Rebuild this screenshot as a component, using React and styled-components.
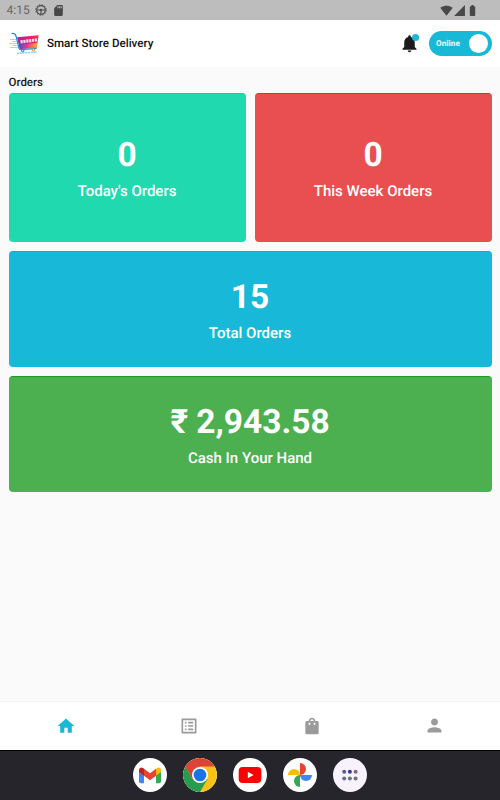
import React from 'react';
import styled, { createGlobalStyle } from 'styled-components';
import {
  MdBatteryFull,
  MdHome,
  MdListAlt,
  MdNotifications,
  MdPerson,
  MdSdCard,
  MdShoppingBag,
  MdSignalCellular4Bar,
  MdSignalWifi4Bar,
} from 'react-icons/md';

const GlobalStyle = createGlobalStyle`
  * {
    box-sizing: border-box;
  }

  body {
    margin: 0;
    font-family: Roboto, 'Liberation Sans', sans-serif;
    background: #fafafa;
    text-rendering: geometricPrecision;
  }
`;

const Screen = styled.div`
  width: 500px;
  height: 800px;
  display: flex;
  flex-direction: column;
  overflow: hidden;
  background: #fafafa;
`;

const StatusBar = styled.div`
  height: 20px;
  flex: none;
  display: flex;
  align-items: center;
  justify-content: space-between;
  padding: 0 21px 0 6.5px;
  background: #bdbdbd;
  color: #484848;
`;

const StatusGroup = styled.div`
  display: flex;
  align-items: center;
  gap: ${(props) => props.$gap || 0}px;
`;

const Clock = styled.span`
  width: 23px;
  font-size: 12px;
  line-height: 20px;
  white-space: nowrap;
  color: #666;
`;

const Header = styled.header`
  height: 47px;
  flex: none;
  display: flex;
  align-items: center;
  padding: 0 8px 0 9px;
  background: #fff;
`;

const Title = styled.h1`
  flex: 1;
  margin: 0 0 1px 8px;
  font-size: 11.6px;
  font-weight: 500;
  color: #111;
`;

const BellButton = styled.div`
  position: relative;
  display: flex;
  margin-right: 9px;
  color: #1b1b1b;
`;

const BellDot = styled.span`
  position: absolute;
  top: 1px;
  right: 1px;
  width: 7px;
  height: 7px;
  border-radius: 50%;
  background: #18b9d6;
`;

const Toggle = styled.div`
  width: 63px;
  height: 25px;
  display: flex;
  align-items: center;
  justify-content: space-between;
  padding: 0 4px 0 7px;
  border-radius: 13px;
  background: #18b9d6;
  color: #d7f5fb;
  font-size: 8.2px;
  font-weight: 900;
`;

const Knob = styled.span`
  width: 19px;
  height: 19px;
  border-radius: 50%;
  background: #fff;
`;

const Content = styled.main`
  flex: 1;
  padding: 8px 8.5px 0;
`;

const SectionTitle = styled.h2`
  margin: 0 0 4px;
  font-size: 11.5px;
  font-weight: 500;
  line-height: 14px;
  color: #1b1b1b;
`;

const Cards = styled.div`
  display: grid;
  grid-template-columns: 1fr 1fr;
  gap: 9px;
`;

const Card = styled.div`
  grid-column: ${(props) => (props.$wide ? 'span 2' : 'auto')};
  height: ${(props) => (props.$wide ? 116 : 149)}px;
  display: flex;
  flex-direction: column;
  align-items: center;
  justify-content: center;
  border-radius: 4px;
  border-top: 1px solid ${(props) => props.$edge};
  background: ${(props) => props.$color};
  color: #fff;
`;

const Amount = styled.div`
  font-size: 33.5px;
  font-weight: 700;
  line-height: 40px;
`;

const Label = styled.div`
  margin-top: 6px;
  font-size: 15px;
  font-weight: 500;
  line-height: 18px;
`;

const BottomNav = styled.nav`
  height: 49px;
  flex: none;
  display: flex;
  padding: 0 4px 1px 5px;
  border-top: 1px solid #f3f3f3;
  background: #fff;
`;

const NavItem = styled.div`
  flex: 1;
  display: flex;
  align-items: center;
  justify-content: center;
  color: ${(props) => (props.$active ? '#18b9d6' : '#9b9b9b')};
`;

const Dock = styled.div`
  height: 50px;
  flex: none;
  display: flex;
  align-items: center;
  justify-content: center;
  gap: 16px;
  padding-bottom: 1px;
  border-top: 1px solid #000;
  background: #25252b;
`;

const AppIcon = styled.div`
  width: 34px;
  height: 34px;
  display: flex;
  border-radius: 50%;
  overflow: hidden;
  background: ${(props) => props.$color || '#fff'};
`;

const StoreLogo = () => (
  <svg width='30' height='24' viewBox='0 0 30 24'>
    <defs>
      <linearGradient id='cart' x1='0' y1='0.8' x2='1' y2='0.2'>
        <stop offset='0' stopColor='#4b3fb8' />
        <stop offset='0.3' stopColor='#b51f9a' />
        <stop offset='0.65' stopColor='#ed1773' />
        <stop offset='1' stopColor='#f9304c' />
      </linearGradient>
      <linearGradient id='basket' x1='0' y1='0' x2='1' y2='0'>
        <stop offset='0' stopColor='#5b45c4' />
        <stop offset='0.45' stopColor='#e6398a' />
        <stop offset='1' stopColor='#ffb31a' />
      </linearGradient>
    </defs>
    <path d='M8 5.2 29.6 3.2 27.8 15.5 10.8 17Z' fill='url(#cart)' />
    <path d='M10 12.5 28.2 11 27.6 15.6 10.8 17Z' fill='url(#basket)' />
    <path
      d='M2.5 1.5Q6 .8 7 4L10 16.4Q10.4 17.8 12.4 17.6L27.6 16.4'
      fill='none'
      stroke='#278cc7'
      strokeWidth='1.2'
    />
    <path
      d='M1 7.5h6M3 9.5h5M0 11.5h8M3.5 13.5h5M1 15.5h8'
      stroke='#8ad2ee'
      strokeWidth='0.8'
    />
    <path
      d='M11.5 9.9 28 7.9'
      stroke='#fff'
      strokeWidth='3.2'
      strokeDasharray='2.2 0.7'
      opacity='0.85'
    />
    <circle cx='13.8' cy='18.8' r='1.2' fill='#fff' stroke='#704ca8' />
    <circle cx='24.4' cy='18' r='1.2' fill='#fff' stroke='#f58a3c' />
    <path
      d='M8 21.4l20-1.3'
      stroke='#83d3ec'
      strokeWidth='1.5'
      strokeDasharray='2 0.8'
    />
  </svg>
);

const DebugIcon = () => (
  <svg width='12' height='12' viewBox='0 0 12 12' fill='none' stroke='#484848'>
    <circle cx='6' cy='6' r='4.3' strokeWidth='1.2' />
    <circle cx='6' cy='6' r='5.3' strokeWidth='1' strokeDasharray='1.3 1.47' />
    <path d='M2 6h8M6 6v4' strokeWidth='1.1' />
    <circle cx='6' cy='5.8' r='1.1' fill='#484848' stroke='none' />
  </svg>
);

const GmailLogo = () => (
  <svg width='34' height='34' viewBox='0 0 34 34'>
    <path d='M6 12.5v11q0 1.7 1.7 1.7H11V14.8Z' fill='#4285f4' />
    <path d='M23 14.8v10.4h3.4q1.6 0 1.6-1.7v-11Z' fill='#34a853' />
    <path d='M11 10.7v7.1l6 4.5 6-4.5v-7.1l-6 4.5Z' fill='#ea4335' />
    <path d='M6 11.8v2.3l5 3.7v-7.1l-1-.8q-3-1.6-4 1.9Z' fill='#c5221f' />
    <path d='M23 10.7v7.1l5-3.7v-2.3q-1-3.5-4-1.9Z' fill='#fbbc04' />
  </svg>
);

const ChromeLogo = () => (
  <svg width='34' height='34' viewBox='0 0 34 34'>
    <circle cx='17' cy='17' r='17' fill='#fbc116' />
    <path d='M2.28 8.5A17 17 0 0 1 31.72 8.5H17L9.64 21.25Z' fill='#db4437' />
    <path d='M2.28 8.5A17 17 0 0 0 17 34L24.36 21.25H9.64Z' fill='#279b50' />
    <circle cx='17' cy='17' r='8' fill='#fff' />
    <circle cx='17' cy='17' r='6.3' fill='#1a73e8' />
  </svg>
);

const YoutubeLogo = () => (
  <svg width='34' height='34' viewBox='0 0 34 34'>
    <rect x='5.7' y='9' width='22.6' height='16' rx='4' fill='#f00' />
    <path d='M14.8 13.7v6.6l5.8-3.3Z' fill='#fff' />
  </svg>
);

const PhotosLogo = () => (
  <svg width='34' height='34' viewBox='0 0 34 34'>
    <path d='M17 17V5a6 6 0 0 1 0 12Z' fill='#ea4335' />
    <path d='M17 17h12a6 6 0 0 1-12 0Z' fill='#4285f4' />
    <path d='M17 17v12a6 6 0 0 1 0-12Z' fill='#34a853' />
    <path d='M17 17H5a6 6 0 0 1 12 0Z' fill='#fbbc04' />
  </svg>
);

const DrawerDots = () => (
  <svg width='34' height='34' viewBox='0 0 34 34'>
    <circle cx='11.2' cy='13.7' r='2' fill='#53618f' />
    <circle cx='16.9' cy='13.7' r='2' fill='#343d91' />
    <circle cx='22.6' cy='13.7' r='2' fill='#8e6277' />
    <circle cx='11.2' cy='20.4' r='2' fill='#6d7080' />
    <circle cx='16.9' cy='20.4' r='2' fill='#707284' />
    <circle cx='22.6' cy='20.4' r='2' fill='#707180' />
  </svg>
);

const App = () => {
  return (
    <Screen>
      <GlobalStyle />
      <StatusBar>
        <StatusGroup $gap={5}>
          <Clock>4:15</Clock>
          <DebugIcon />
          <MdSdCard size={13} />
        </StatusGroup>
        <StatusGroup>
          <MdSignalWifi4Bar size={13} />
          <MdSignalCellular4Bar size={13} />
          <MdBatteryFull size={13} />
        </StatusGroup>
      </StatusBar>

      <Header>
        <StoreLogo />
        <Title>Smart Store Delivery</Title>
        <BellButton>
          <MdNotifications size={21} />
          <BellDot />
        </BellButton>
        <Toggle>
          Online
          <Knob />
        </Toggle>
      </Header>

      <Content>
        <SectionTitle>Orders</SectionTitle>
        <Cards>
          <Card $color='#20d9ae' $edge='#12cfa2'>
            <Amount>0</Amount>
            <Label>Today's Orders</Label>
          </Card>
          <Card $color='#e94e50' $edge='#df3033'>
            <Amount>0</Amount>
            <Label>This Week Orders</Label>
          </Card>
          <Card $wide $color='#18b9d8' $edge='#08afd0'>
            <Amount>15</Amount>
            <Label>Total Orders</Label>
          </Card>
          <Card $wide $color='#4caf50' $edge='#16a01b'>
            <Amount>₹ 2,943.58</Amount>
            <Label>Cash In Your Hand</Label>
          </Card>
        </Cards>
      </Content>

      <BottomNav>
        <NavItem $active>
          <MdHome size={20} />
        </NavItem>
        <NavItem>
          <MdListAlt size={20} />
        </NavItem>
        <NavItem>
          <MdShoppingBag size={20} />
        </NavItem>
        <NavItem>
          <MdPerson size={21} />
        </NavItem>
      </BottomNav>

      <Dock>
        <AppIcon>
          <GmailLogo />
        </AppIcon>
        <AppIcon>
          <ChromeLogo />
        </AppIcon>
        <AppIcon>
          <YoutubeLogo />
        </AppIcon>
        <AppIcon>
          <PhotosLogo />
        </AppIcon>
        <AppIcon $color='#f8f2fc'>
          <DrawerDots />
        </AppIcon>
      </Dock>
    </Screen>
  );
};

export default App;
